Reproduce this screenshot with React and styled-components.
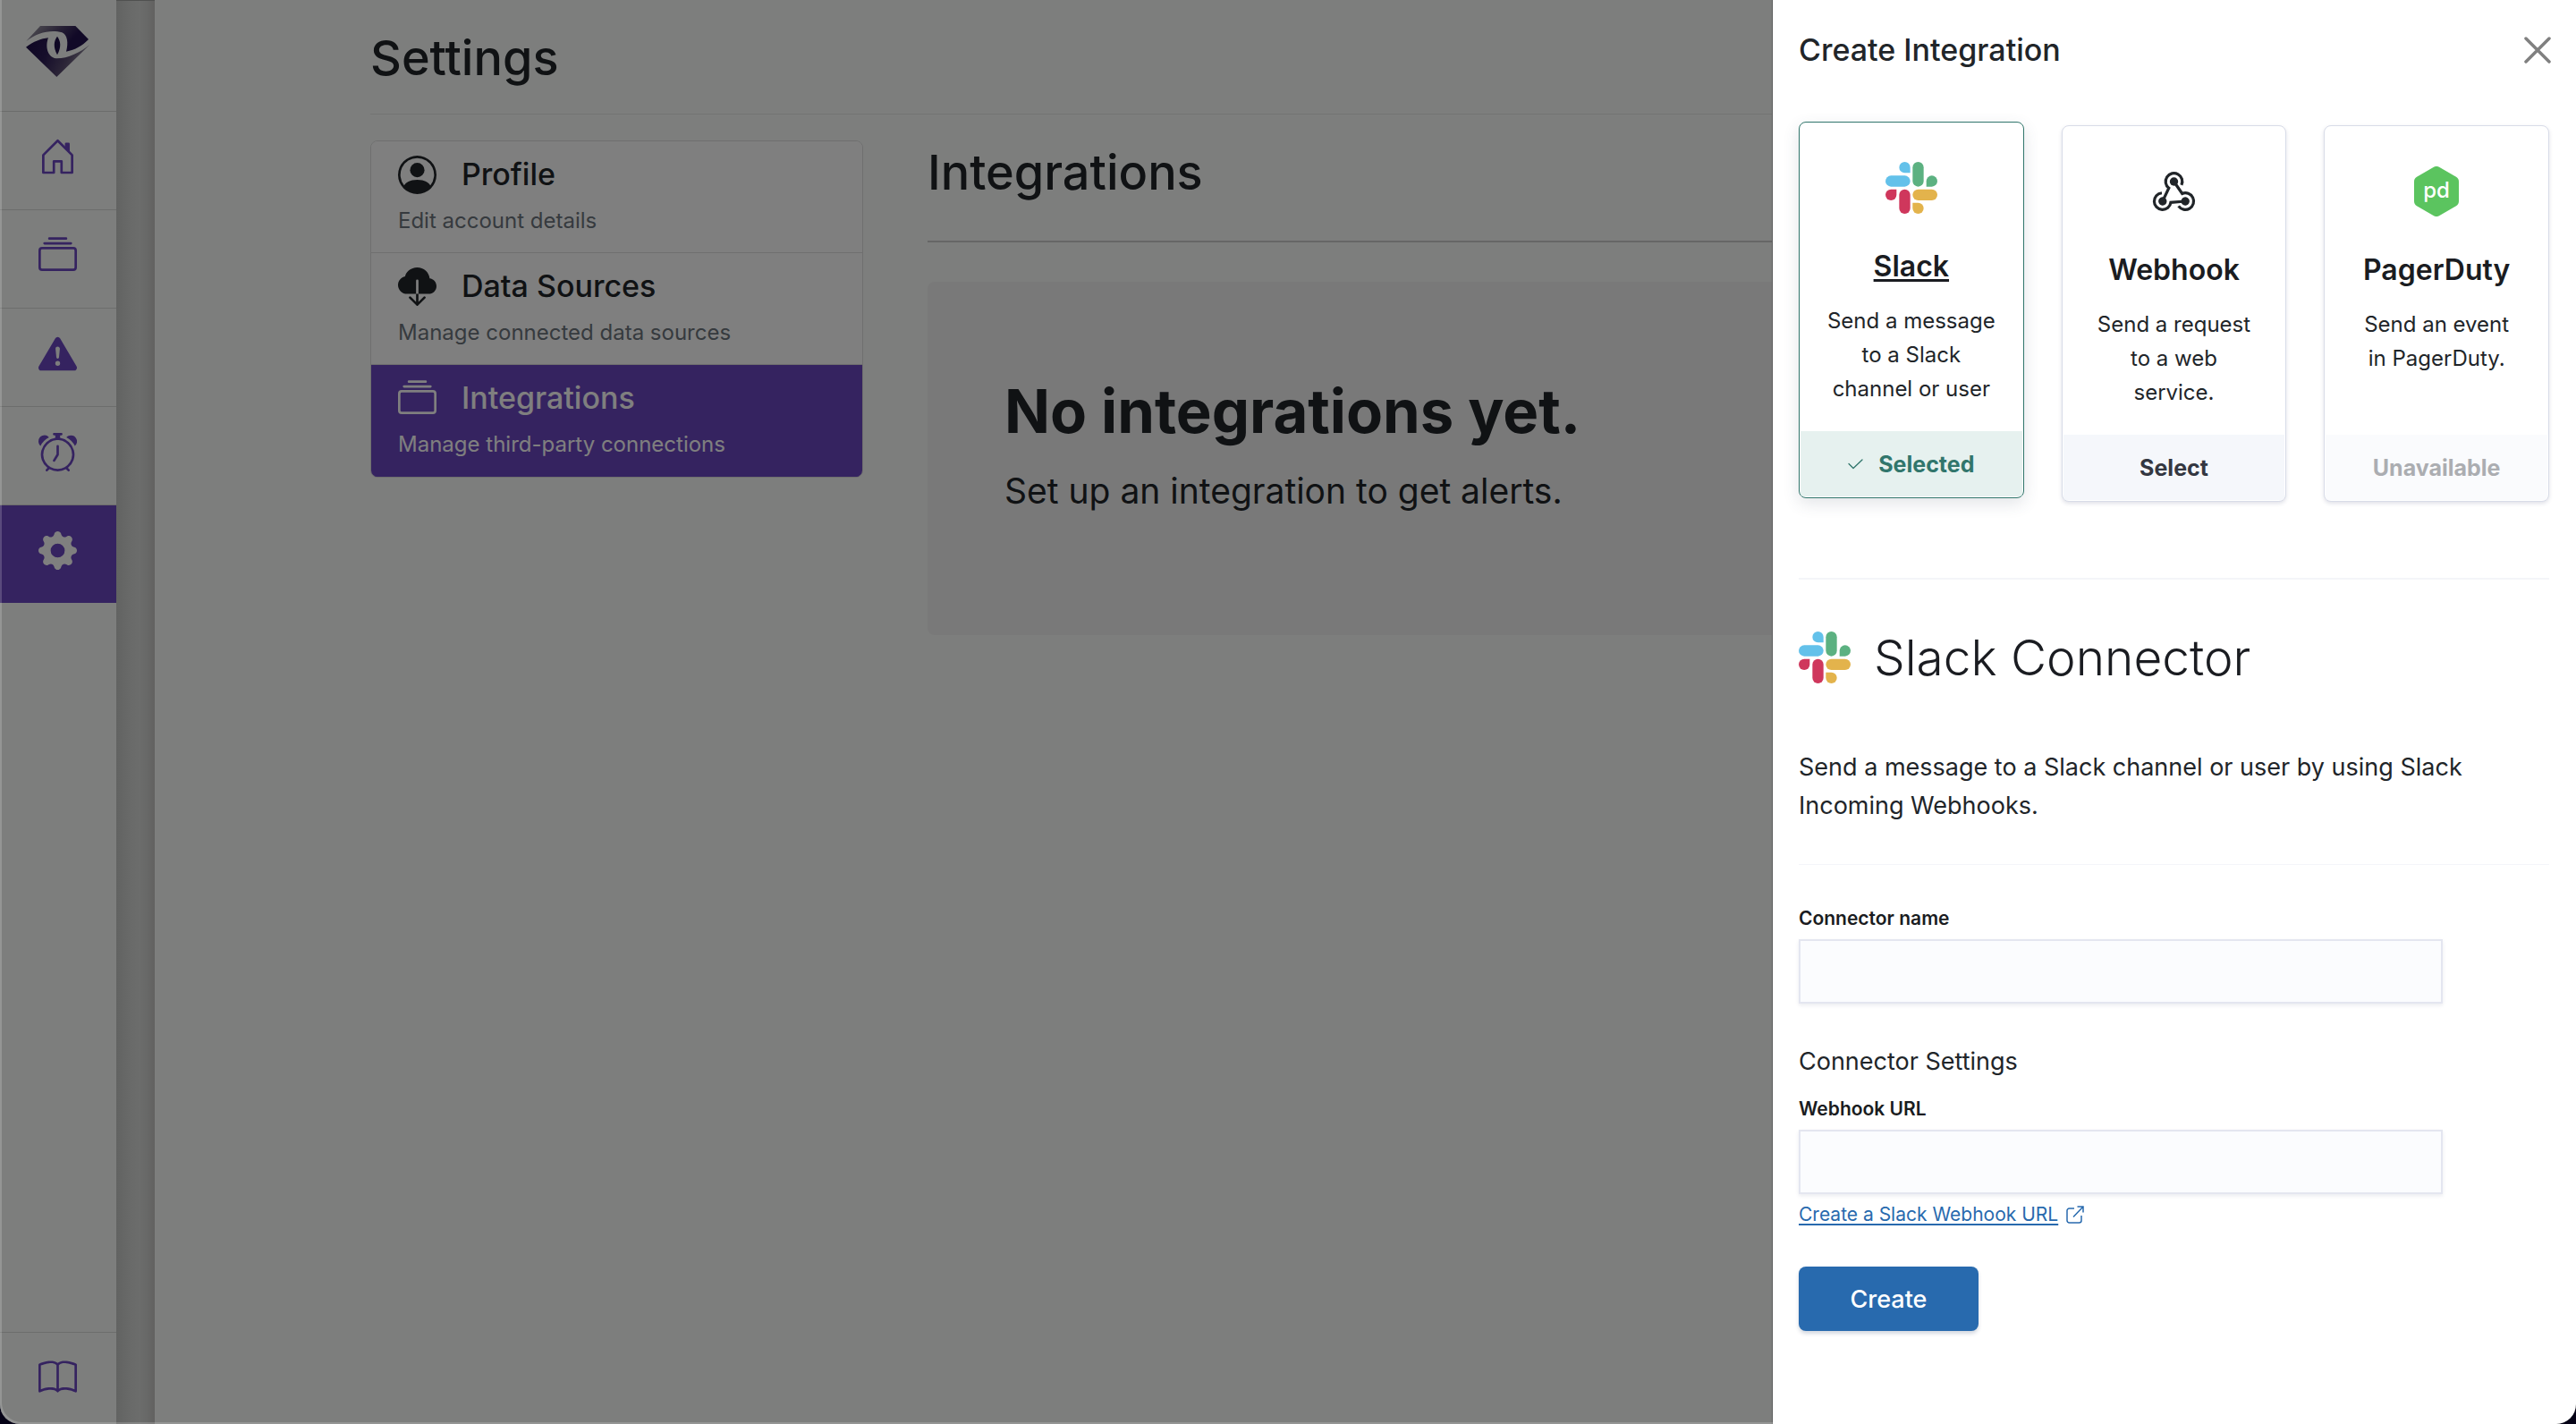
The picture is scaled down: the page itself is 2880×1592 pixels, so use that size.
import React, { useState } from "react";
import styled, { createGlobalStyle, css } from "styled-components";
import {
  BsAlarm,
  BsBook,
  BsCloudDownloadFill,
  BsCollection,
  BsExclamationTriangleFill,
  BsGearFill,
  BsPersonCircle,
} from "react-icons/bs";

const color = {
  ink: "#212529",
  title: "#1a1c21",
  muted: "#6c757d",
  brand: "#6b46c1",
  page: "#fafdfb",
  rule: "#f4f5f9",
  edge: "#d8dce8",
  blue: "#286aae",
  green: "#31766c",
};

const GlobalStyle = createGlobalStyle`
  *, *::before, *::after { box-sizing: border-box; }
  body {
    margin: 0;
    background: #050216;
    color: ${color.ink};
    font-family: Inter, "Liberation Sans", sans-serif;
  }
  h1, h2, h3, p { margin: 0; }
  button, input { font: inherit; }
`;

/* ---------- Shell ---------- */

const Shell = styled.div`
  position: relative;
  display: flex;
  min-height: 100vh;
  overflow: hidden;
  background: ${color.page};
  border-radius: 0 0 22px 22px;

  &::after {
    content: "";
    position: absolute;
    inset: 0;
    border-radius: inherit;
    box-shadow: inset 2px -2px 0 rgba(255, 255, 255, 0.18);
    pointer-events: none;
  }
`;

const Sidebar = styled.nav`
  display: flex;
  flex-direction: column;
  flex: none;
  width: 130px;
`;

const Brand = styled.a`
  display: flex;
  justify-content: center;
  height: 124px;
  padding: 20px 1px 0 0;
`;

const SideLink = styled.a`
  display: flex;
  justify-content: center;
  height: ${(p) => (p.$last ? "103px" : "110px")};
  margin-top: ${(p) => (p.$last ? "auto" : "0")};
  padding: 29px 1px 0 0;
  border-top: 1px solid #d8dad9;
  background: ${(p) => (p.$active ? color.brand : "transparent")};
  color: ${(p) => (p.$active ? "#ffffff" : color.brand)};

  svg {
    width: 43px;
    height: 43px;
  }
`;

const Gutter = styled.div`
  flex: none;
  width: 43px;
  border-top: 1px solid #a0a2a1;
  background: linear-gradient(
    to right,
    #c4c6c4,
    #d2d4d2 35%,
    #d8dad8 60%,
    #d0d1cf 80%,
    #c4c3c1
  );
`;

const Main = styled.main`
  flex: 1;
  min-width: 0;
  padding: 33px 241px 0;
`;

const PageTitle = styled.h1`
  font-size: 54px;
  font-weight: 500;
  line-height: 64px;
`;

const PageHeader = styled.header`
  padding-bottom: 30px;
  border-bottom: 1px solid #e6e8e7;
`;

const Columns = styled.div`
  display: grid;
  grid-template-columns: 551px minmax(0, 1fr);
  align-items: start;
  gap: 72px;
  padding-top: 29px;
`;

/* ---------- Settings list ---------- */

const SettingsList = styled.div`
  overflow: hidden;
  border: 1px solid #dfdfdf;
  border-radius: 8px;
`;

const SettingsItem = styled.a`
  display: flex;
  flex-direction: column;
  gap: 12px;
  padding: 15px 30px 17px;
  border-bottom: 1px solid ${(p) => (p.$active ? color.brand : "#dfdfdf")};
  background: ${(p) => (p.$active ? color.brand : "#ffffff")};
  color: ${(p) => (p.$active ? "#ffffff" : color.ink)};
  text-decoration: none;
`;

const ItemHead = styled.span`
  display: flex;
  align-items: center;
  gap: 28px;
  height: 44px;
  font-size: 34px;
  font-weight: 500;
  line-height: 40px;

  svg {
    width: 43px;
    height: 43px;
  }
`;

const ItemNote = styled.span`
  color: ${(p) => (p.$active ? "#ffffff" : color.muted)};
  font-size: 24px;
  line-height: 36px;
`;

/* ---------- Integrations ---------- */

const SectionHeader = styled.header`
  padding: 4px 0 44px;
  border-bottom: 2px solid #cccccc;
`;

const EmptyPanel = styled.section`
  margin-top: 44px;
  padding: 105px 86px 133px;
  border-radius: 8px;
  background: #f2f2f2;
`;

const EmptyTitle = styled.h3`
  font-size: 67px;
  font-weight: 700;
  line-height: 80px;
`;

const EmptyText = styled.p`
  margin-top: 21px;
  font-size: 39px;
  line-height: 56px;
`;

/* ---------- Drawer ---------- */

const Backdrop = styled.div`
  position: absolute;
  inset: 0;
  background: rgba(0, 0, 0, 0.5);
`;

const Drawer = styled.aside`
  position: absolute;
  top: 0;
  right: 0;
  bottom: 0;
  width: 899px;
  padding: 32px 30px 32px 29px;
  overflow-y: auto;
  border-left: 1px solid #5c5d5d;
  border-bottom-right-radius: 22px;
  background: #ffffff;
`;

const DrawerHeader = styled.header`
  display: flex;
  align-items: center;
  justify-content: space-between;
`;

const DrawerTitle = styled.h2`
  font-size: 34px;
  font-weight: 500;
  line-height: 48px;
`;

const CloseButton = styled.button`
  display: flex;
  margin-right: -2px;
  padding: 0;
  border: 0;
  background: none;
  color: #808080;
`;

const CardGrid = styled.div`
  display: grid;
  grid-template-columns: repeat(3, minmax(0, 1fr));
  gap: 42px;
  margin-top: 60px;
`;

const Card = styled.article`
  display: flex;
  flex-direction: column;
  overflow: hidden;
  border: 1px solid ${color.edge};
  border-radius: 8px;
  background: #ffffff;
  box-shadow: 0 2px 4px rgba(60, 70, 110, 0.16);
  text-align: center;

  ${(p) =>
    p.$selected &&
    css`
      border-color: ${color.green};
      box-shadow: 0 6px 18px rgba(60, 70, 90, 0.14);
      transform: translateY(-4px);
    `}
`;

const CardBody = styled.div`
  flex: 1;
  padding: 41px 29px 28px;
`;

const CardLogo = styled.div`
  display: flex;
  align-items: center;
  justify-content: center;
  height: 64px;
`;

const CardTitle = styled.h3`
  margin: 36px 0 22px;
  color: ${color.title};
  font-size: 32px;
  font-weight: 600;
  line-height: 40px;
  text-decoration: ${(p) => (p.$selected ? "underline" : "none")};
  text-decoration-thickness: 3px;
  text-underline-offset: 3px;
  text-decoration-skip-ink: none;
`;

const CardText = styled.p`
  font-size: 24px;
  line-height: 38px;
`;

const CardAction = styled.button`
  display: flex;
  align-items: center;
  justify-content: center;
  gap: 17px;
  height: 73px;
  margin: 0 1px 1px;
  padding: 0;
  border: 0;
  background: #f5f7fb;
  color: #343741;
  font-size: 25px;
  font-weight: 700;

  &:disabled {
    background: #fafbfd;
    color: #abadb1;
  }

  ${(p) =>
    p.$selected &&
    css`
      background: #e6f1ef;
      color: ${color.green};
    `}
`;

const Rule = styled.hr`
  height: ${(p) => (p.$thick ? "2px" : "1px")};
  margin: 0;
  border: 0;
  background: ${color.rule};
`;

const Connector = styled.section`
  padding: 55px 0 44px;
`;

const ConnectorHead = styled.div`
  display: flex;
  align-items: center;
  gap: 26px;
  margin-bottom: 69px;
`;

const ConnectorTitle = styled.h2`
  color: ${color.title};
  font-size: 55px;
  font-weight: 300;
  line-height: 64px;
`;

const ConnectorText = styled.p`
  font-size: 27px;
  line-height: 43px;
`;

const CardsSection = styled.section`
  padding-bottom: 85px;
`;

const Form = styled.form`
  padding-top: 44px;
`;

const Field = styled.div`
  display: flex;
  flex-direction: column;
  align-items: flex-start;
  gap: 7px;
`;

const Label = styled.label`
  color: ${color.title};
  font-size: 21px;
  font-weight: 600;
  line-height: 32px;
`;

const TextBox = styled.input`
  width: 100%;
  max-width: 720px;
  height: 72px;
  padding: 0 24px;
  border: 2px solid #e4e6f0;
  border-radius: 0;
  outline: 0;
  background: #fbfcfe;
  box-shadow: 0 2px 4px rgba(60, 70, 110, 0.1);
  font-size: 27px;
`;

const GroupTitle = styled.h3`
  margin: 45px 0 17px;
  font-size: 27px;
  font-weight: 400;
  line-height: 40px;
`;

const HelpLink = styled.a`
  display: inline-flex;
  align-items: center;
  gap: 9px;
  color: ${color.blue};
  font-size: 21px;
  line-height: 32px;
  text-decoration: none;

  span {
    text-decoration: underline;
    text-decoration-thickness: 2px;
    text-underline-offset: 3px;
  }
`;

const SubmitButton = styled.button`
  min-width: 201px;
  height: 72px;
  margin-top: 42px;
  border: 0;
  border-radius: 8px;
  background: ${color.blue};
  box-shadow: 0 3px 4px rgba(40, 60, 100, 0.2);
  color: #ffffff;
  font-size: 27px;
  font-weight: 500;
`;

/* ---------- Drawings ---------- */

const BrandMark = () => (
  <svg width="90" height="74" viewBox="0 0 270 222" role="img" aria-label="Home">
    <defs>
      <linearGradient id="gemTop" x1="0" y1="0.2" x2="1" y2="0.6">
        <stop offset="0.1" stopColor="#8e8a98" />
        <stop offset="0.45" stopColor="#4c3f68" />
        <stop offset="0.75" stopColor="#22124e" />
      </linearGradient>
      <linearGradient id="gemBottom" x1="0" y1="0.2" x2="1" y2="0.5">
        <stop offset="0" stopColor="#1e0e48" />
        <stop offset="0.35" stopColor="#2c1c56" />
        <stop offset="0.7" stopColor="#5a4d70" />
        <stop offset="1" stopColor="#a09ca8" />
      </linearGradient>
    </defs>
    <path
      fill="url(#gemTop)"
      d="M75 27H193L237 72C216 94 192 107 162 113C170 84 166 56 148 49C112 38 66 48 28 78Z"
    />
    <path
      fill="url(#gemBottom)"
      d="M27 98C52 80 78 69 102 67C91 96 99 132 128 136C166 137 210 116 241 90L130 198Z"
    />
    <path fill="#1e0e48" d="M132 62C120 78 118 98 132 124C146 98 144 78 132 62Z" />
  </svg>
);

const HouseIcon = () => (
  <svg viewBox="0 0 16 16" fill="none" aria-hidden="true">
    <path d="M2 14.5V7.2L8 1.2L14 7.2V14.5H9.6V9.8H6.4V14.5Z" stroke="currentColor" strokeWidth="1" strokeLinejoin="round" />
    <path d="M13 6V2.5a.5.5 0 0 0-.5-.5h-1a.5.5 0 0 0-.5.5V4z" fill="currentColor" />
  </svg>
);

const SlackMark = () => (
  <svg width="58" height="58" viewBox="0 0 174 174" aria-hidden="true">
    <g fill="#63c1ea">
      <path d="M83 37H64.500A18.500 18.500 0 1 1 83 18.500Z" />
      <rect x="0" y="46" width="83" height="37" rx="18.500" />
    </g>
    <g fill="#5cb181">
      <rect x="91" y="0" width="37" height="83" rx="18.500" />
      <path d="M137 83V64.500A18.500 18.500 0 1 1 155.500 83Z" />
    </g>
    <g fill="#cf375c">
      <path d="M37 92V110.500A18.500 18.500 0 1 1 18.500 92Z" />
      <rect x="46" y="92" width="37" height="82" rx="18.500" />
    </g>
    <g fill="#e3b34c">
      <rect x="91" y="92" width="83" height="37" rx="18.500" />
      <path d="M91 137H109.500A18.500 18.500 0 1 1 91 155.500Z" />
    </g>
  </svg>
);

const WebhookMark = () => {
  const arm = (
    <>
      <circle cx="23.500" cy="11" r="4.700" fill="currentColor" />
      <path d="M31.900 14.900A9.300 9.300 0 1 0 17.800 18.300L10.800 33" fill="none" stroke="currentColor" strokeWidth="3.200" />
    </>
  );
  return (
    <svg width="47" height="44" viewBox="0 0 47 44" overflow="visible" aria-hidden="true">
      <g>{arm}</g>
      <g transform="rotate(120 23.5 25.67)">{arm}</g>
      <g transform="rotate(240 23.5 25.67)">{arm}</g>
    </svg>
  );
};

const PagerDutyMark = () => (
  <svg width="50" height="56" viewBox="0 0 50 56" aria-hidden="true">
    <path
      d="M25 6L44 17V39L25 50L6 39V17Z"
      fill="#5bc45f"
      stroke="#5bc45f"
      strokeWidth="12"
      strokeLinejoin="round"
    />
    <text x="25" y="35" fill="#ffffff" fontFamily="Inter, sans-serif" fontSize="24" fontWeight="500" textAnchor="middle">
      pd
    </text>
  </svg>
);

const CheckIcon = () => (
  <svg width="17" height="12" viewBox="0 0 17 12" fill="none" aria-hidden="true">
    <path d="M1 5.500L6 10.500L16 1" stroke="currentColor" strokeWidth="1.300" strokeLinecap="round" strokeLinejoin="round" />
  </svg>
);

const CloseIcon = () => (
  <svg width="30" height="30" viewBox="0 0 30 30" fill="none" aria-hidden="true">
    <path d="M2 2L28 28M28 2L2 28" stroke="currentColor" strokeWidth="3.500" strokeLinecap="round" />
  </svg>
);

const ExternalIcon = () => (
  <svg width="20" height="20" viewBox="0 0 20 20" fill="none" stroke="currentColor" strokeWidth="1.500" aria-hidden="true">
    <path d="M9 3H3.500A2.500 2.500 0 0 0 1 5.500V16.500A2.500 2.500 0 0 0 3.500 19H14.500A2.500 2.500 0 0 0 17 16.500V11" />
    <path d="M12.500 1H19V7.500M19 1L8 12.500" />
  </svg>
);

/* ---------- Data ---------- */

const sideLinks = [
  { label: "Overview", icon: HouseIcon },
  { label: "Collections", icon: BsCollection },
  { label: "Incidents", icon: BsExclamationTriangleFill },
  { label: "Alerts", icon: BsAlarm },
  { label: "Settings", icon: BsGearFill, active: true },
  { label: "Documentation", icon: BsBook, last: true },
];

const settingsItems = [
  { title: "Profile", note: "Edit account details", icon: BsPersonCircle },
  { title: "Data Sources", note: "Manage connected data sources", icon: BsCloudDownloadFill },
  { title: "Integrations", note: "Manage third-party connections", icon: BsCollection, active: true },
];

const connectors = [
  { id: "slack", title: "Slack", text: "Send a message to a Slack channel or user", logo: SlackMark },
  { id: "webhook", title: "Webhook", text: "Send a request to a web service.", logo: WebhookMark },
  { id: "pagerduty", title: "PagerDuty", text: "Send an event in\u00a0PagerDuty.", logo: PagerDutyMark, unavailable: true },
];

function ConnectorCard({ item, selected, onSelect }) {
  const Logo = item.logo;
  return (
    <Card $selected={selected}>
      <CardBody>
        <CardLogo>
          <Logo />
        </CardLogo>
        <CardTitle $selected={selected}>{item.title}</CardTitle>
        <CardText>{item.text}</CardText>
      </CardBody>
      <CardAction type="button" $selected={selected} disabled={item.unavailable} onClick={onSelect}>
        {selected && <CheckIcon />}
        {item.unavailable ? "Unavailable" : selected ? "Selected" : "Select"}
      </CardAction>
    </Card>
  );
}

export default function App() {
  const [chosen, setChosen] = useState("slack");

  return (
    <>
      <GlobalStyle />
      <Shell>
        <Sidebar>
          <Brand href="#home">
            <BrandMark />
          </Brand>
          {sideLinks.map(({ label, icon: Icon, active, last }) => (
            <SideLink key={label} href="#nav" aria-label={label} $active={active} $last={last}>
              <Icon />
            </SideLink>
          ))}
        </Sidebar>
        <Gutter />
        <Main>
          <PageHeader>
            <PageTitle>Settings</PageTitle>
          </PageHeader>
          <Columns>
            <SettingsList>
              {settingsItems.map(({ title, note, icon: Icon, active }) => (
                <SettingsItem key={title} href="#settings" $active={active}>
                  <ItemHead>
                    <Icon />
                    {title}
                  </ItemHead>
                  <ItemNote $active={active}>{note}</ItemNote>
                </SettingsItem>
              ))}
            </SettingsList>
            <div>
              <SectionHeader>
                <PageTitle as="h2">Integrations</PageTitle>
              </SectionHeader>
              <EmptyPanel>
                <EmptyTitle>No integrations yet.</EmptyTitle>
                <EmptyText>Set up an integration to get alerts.</EmptyText>
              </EmptyPanel>
            </div>
          </Columns>
        </Main>

        <Backdrop />
        <Drawer role="dialog" aria-labelledby="drawer-title">
          <DrawerHeader>
            <DrawerTitle id="drawer-title">Create Integration</DrawerTitle>
            <CloseButton type="button" aria-label="Close">
              <CloseIcon />
            </CloseButton>
          </DrawerHeader>
          <CardsSection>
            <CardGrid>
              {connectors.map((item) => (
                <ConnectorCard
                  key={item.id}
                  item={item}
                  selected={item.id === chosen}
                  onSelect={() => setChosen(item.id)}
                />
              ))}
            </CardGrid>
          </CardsSection>
          <Rule $thick />
          <Connector>
            <ConnectorHead>
              <SlackMark />
              <ConnectorTitle>Slack Connector</ConnectorTitle>
            </ConnectorHead>
            <ConnectorText>
              Send a message to a Slack channel or user by using Slack Incoming Webhooks.
            </ConnectorText>
          </Connector>
          <Rule />
          <Form>
            <Field>
              <Label htmlFor="connector-name">Connector name</Label>
              <TextBox id="connector-name" type="text" />
            </Field>
            <GroupTitle>Connector Settings</GroupTitle>
            <Field>
              <Label htmlFor="webhook-url">Webhook URL</Label>
              <TextBox id="webhook-url" type="url" />
              <HelpLink href="#webhook-help">
                <span>Create a Slack Webhook URL</span>
                <ExternalIcon />
              </HelpLink>
            </Field>
            <SubmitButton type="button">Create</SubmitButton>
          </Form>
        </Drawer>
      </Shell>
    </>
  );
}
